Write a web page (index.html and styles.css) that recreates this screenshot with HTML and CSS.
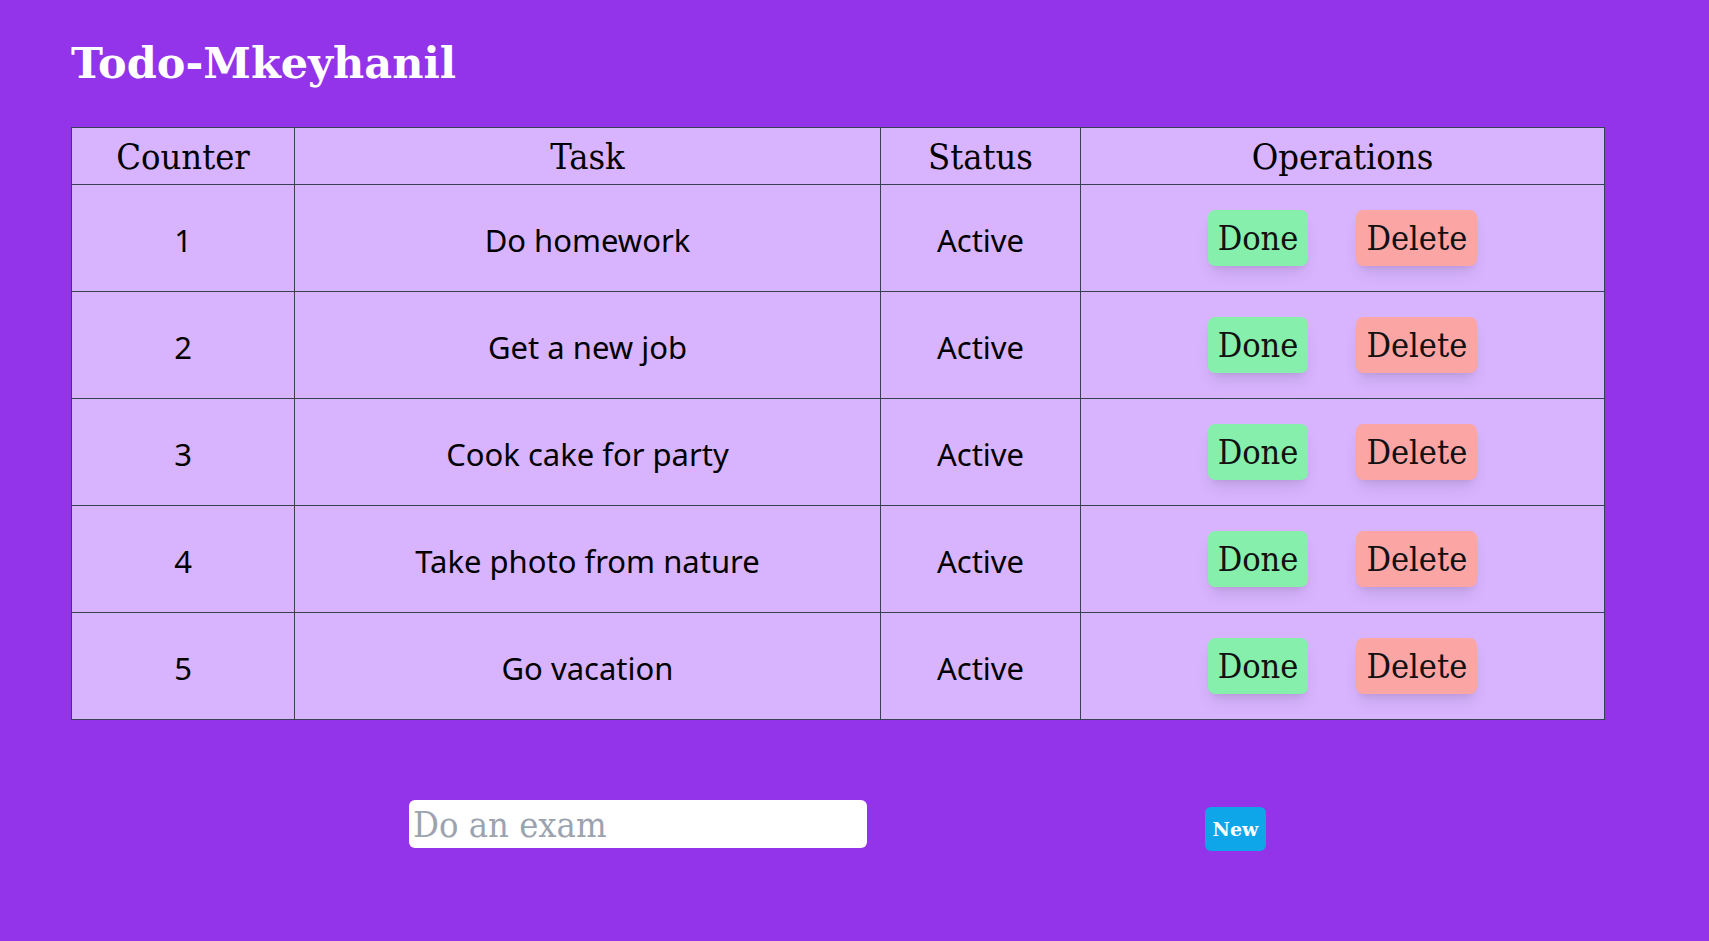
FILE: index.html
```html
<!DOCTYPE html>
<html lang="en">
<head>
<meta charset="utf-8">
<title>Todo-Mkeyhanil</title>
<link rel="stylesheet" href="styles.css">
</head>
<body>
<div class="app">
  <h1 class="title">Todo-Mkeyhanil</h1>
  <table class="todos">
    <colgroup>
      <col class="c-counter">
      <col class="c-task">
      <col class="c-status">
      <col class="c-ops">
    </colgroup>
    <thead>
      <tr><th>Counter</th><th>Task</th><th>Status</th><th>Operations</th></tr>
    </thead>
    <tbody>
      <tr><td>1</td><td>Do homework</td><td>Active</td><td><div class="ops"><button class="btn done">Done</button><button class="btn delete">Delete</button></div></td></tr>
      <tr><td>2</td><td>Get a new job</td><td>Active</td><td><div class="ops"><button class="btn done">Done</button><button class="btn delete">Delete</button></div></td></tr>
      <tr><td>3</td><td>Cook cake for party</td><td>Active</td><td><div class="ops"><button class="btn done">Done</button><button class="btn delete">Delete</button></div></td></tr>
      <tr><td>4</td><td>Take photo from nature</td><td>Active</td><td><div class="ops"><button class="btn done">Done</button><button class="btn delete">Delete</button></div></td></tr>
      <tr><td>5</td><td>Go vacation</td><td>Active</td><td><div class="ops"><button class="btn done">Done</button><button class="btn delete">Delete</button></div></td></tr>
    </tbody>
  </table>
  <form class="new-form">
    <input class="new-input" type="text" placeholder="Do an exam">
    <button class="new-btn" type="button">New</button>
  </form>
</div>
</body>
</html>
```
FILE: styles.css
```css
html, body {
  margin: 0;
  padding: 0;
}
body {
  background: #9333ea;
  color: #000;
  font-family: "Noto Sans", "Open Sans", sans-serif;
}
.app {
  padding: 0 105px 0 71px;
}
.title {
  margin: 0;
  padding-top: 37px;
  padding-bottom: 38px;
  font-family: "DejaVu Serif", serif;
  font-weight: 700;
  font-size: 43px;
  line-height: 52px;
  color: #fff;
}
.todos {
  width: 1533px;
  border-collapse: collapse;
  table-layout: fixed;
  background: #d8b4fe;
}
.c-counter { width: 223px; }
.c-task { width: 586px; }
.c-status { width: 200px; }
.c-ops { width: 524px; }
.todos th,
.todos td {
  border: 1px solid #374151;
  text-align: center;
  padding: 0;
}
.todos th {
  height: 56px;
  font-family: "DejaVu Serif", serif;
  font-stretch: condensed;
  font-weight: 400;
  font-size: 36px;
}
.todos td {
  height: 107px;
  padding-top: 4px;
  box-sizing: border-box;
  font-size: 31px;
}
.ops {
  display: flex;
  justify-content: center;
  gap: 48px;
  margin-top: -4px;
}
.btn {
  border: none;
  border-radius: 7px;
  height: 56px;
  padding: 0 10px;
  font-family: "DejaVu Serif", serif;
  font-stretch: condensed;
  font-size: 34px;
  color: #111;
  box-shadow: 0 10px 15px -3px rgba(0, 0, 0, 0.1), 0 4px 6px -4px rgba(0, 0, 0, 0.1);
  cursor: pointer;
}
.done { background: #86efac; }
.delete { background: #fca5a5; }
.new-form {
  display: flex;
  justify-content: space-evenly;
  align-items: flex-start;
  width: 1533px;
  margin-top: 80px;
}
.new-input {
  width: 458px;
  height: 48px;
  box-sizing: border-box;
  border: none;
  border-radius: 6px;
  padding: 0 4px;
  background: #fff;
  font-family: "DejaVu Serif", serif;
  font-stretch: condensed;
  font-size: 36px;
  outline: none;
}
.new-input::placeholder {
  color: #9ca3af;
}
.new-btn {
  margin-top: 7px;
  width: 61px;
  height: 44px;
  border: none;
  border-radius: 6px;
  background: #0ea5e9;
  color: #fff;
  font-family: "DejaVu Serif", serif;
  font-weight: 700;
  font-size: 19px;
  padding: 0;
  cursor: pointer;
}
```
